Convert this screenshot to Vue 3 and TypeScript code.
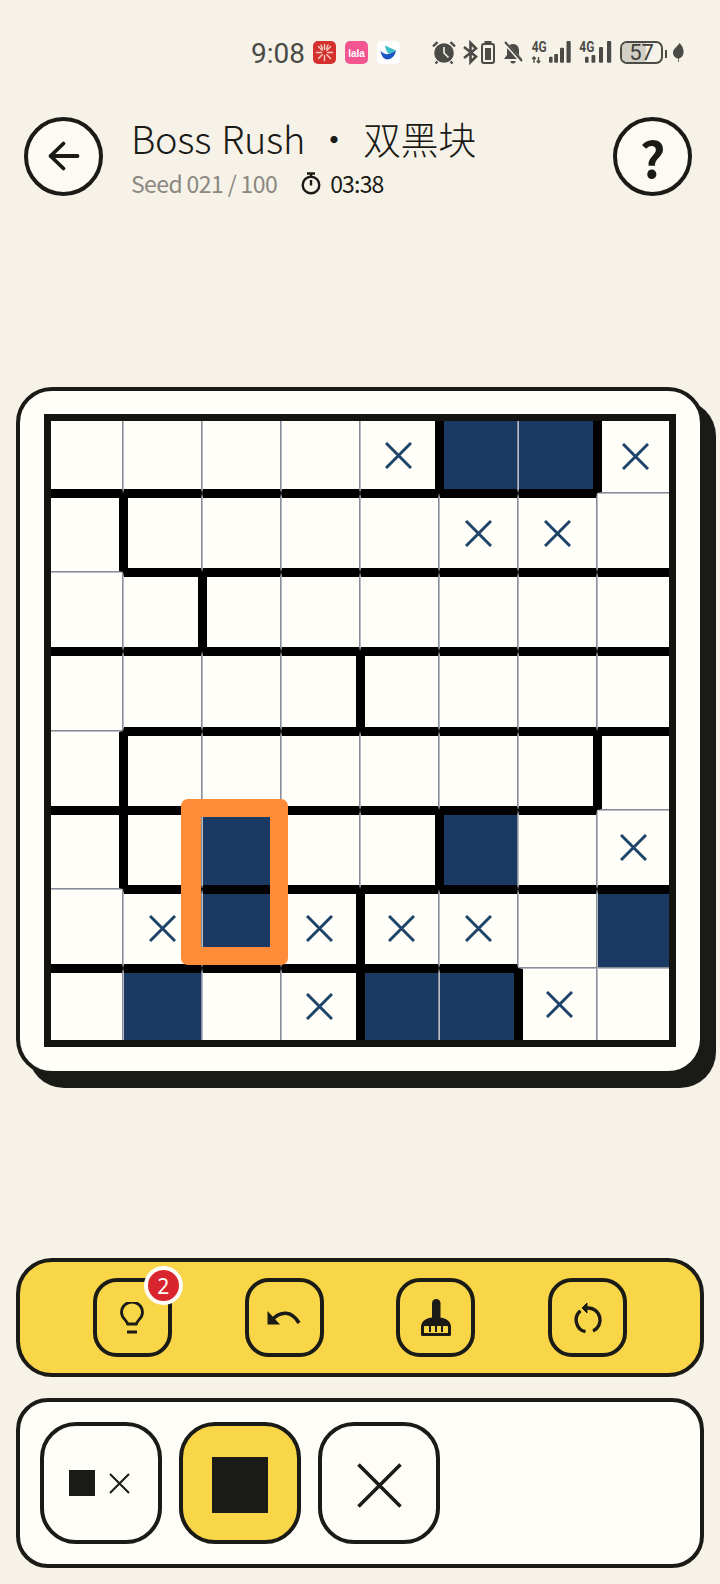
<script setup lang="ts">
// board contents: . empty, x crossed, # filled
const board = [
  "....x##x",
  ".....xx.",
  "........",
  "........",
  "........",
  "..#..#.x",
  ".x#xxx.#",
  ".#.x##x.",
];

// thick wall to the right of these columns, per row
const wallsRight: number[][] = [
  [4, 6],
  [0],
  [1],
  [3],
  [0, 6],
  [0, 4],
  [3],
  [3, 5],
];

// thick wall under these columns, per row
const wallsBelow: number[][] = [
  [0, 1, 2, 3, 4, 5, 6],
  [1, 2, 3, 4, 5, 6, 7],
  [0, 1, 2, 3, 4, 5, 6, 7],
  [1, 2, 3, 4, 5, 6, 7],
  [0, 1, 2, 3, 4, 5, 6],
  [1, 2, 3, 4, 5, 6, 7],
  [0, 1, 2, 3, 4, 5],
  [],
];

const cells = board.flatMap((line, r) =>
  line.split("").map((kind, c) => ({
    id: `${r}-${c}`,
    kind,
    classes: {
      filled: kind === "#",
      "wall-l": c === 0 ? false : wallsRight[r].includes(c - 1),
      "wall-r": wallsRight[r].includes(c),
      "wall-t": r === 0 ? false : wallsBelow[r - 1].includes(c),
      "wall-b": wallsBelow[r].includes(c),
      "edge-l": c === 0,
      "edge-r": c === 7,
      "edge-t": r === 0,
      "edge-b": r === 7,
    },
  }))
);
</script>

<template>
  <div class="page">
    <div class="status">
      <span class="time">9:08</span>
      <svg class="app-icon first" viewBox="0 0 23 23">
        <rect width="23" height="23" rx="5" fill="#d3302e" />
        <g stroke="#f5cfc4" stroke-width="1.400" stroke-linecap="round">
          <path d="M11.500 3.500v5M11.500 14.500v5M3.500 11.500h5M14.500 11.500h5M5.500 5.500l3.700 3.700M13.800 13.800l3.700 3.700M17.500 5.500l-3.700 3.700M9.200 13.800l-3.700 3.700M8 4l1.500 3.500M15 4l-1.500 3.500" />
        </g>
      </svg>
      <svg class="app-icon" viewBox="0 0 23 23">
        <rect width="23" height="23" rx="5" fill="#f2558f" />
        <text x="11.500" y="15.500" text-anchor="middle" class="lala">lala</text>
      </svg>
      <svg class="app-icon" viewBox="0 0 23 23">
        <rect width="23" height="23" rx="5" fill="#ffffff" />
        <path d="M3.500 10c2.500 2.500 5 3.500 8.500 3l7-3.500c-1 5.500-4.500 9-8.500 9-3.800 0-6.200-3.800-7-8.500z" fill="#1c56c4" />
        <path d="M8 4.500l11 5-7 3.500C9.800 11 8.300 8 8 4.500z" fill="#3bbcc4" />
      </svg>

      <svg class="sys alarm" width="24" height="23" viewBox="0 0 24 23">
        <circle cx="12" cy="12" r="9.800" fill="#4a4a46" />
        <path d="M12 6v6l4.500 4.500" fill="none" stroke="#f6f2e8" stroke-width="1.600" />
        <path d="M1 5.500l4.500-4.300M23 5.500l-4.500-4.300M5.500 20.500l-2 2M18.500 20.500l2 2" stroke="#4a4a46" stroke-width="2.400" fill="none" />
      </svg>
      <svg class="sys bt" width="16" height="23" viewBox="0 0 16 23">
        <path d="M1 6l12 9.500-5.500 5.500V2l5.500 5.500L1 17" fill="none" stroke="#4a4a46" stroke-width="2.600" />
      </svg>
      <svg class="sys minibat" width="14" height="23" viewBox="0 0 14 23">
        <rect x="3.500" y="0" width="7" height="2" fill="#4a4a46" />
        <rect x="1" y="3" width="12" height="19" rx="2" fill="none" stroke="#4a4a46" stroke-width="2" />
        <rect x="4" y="7" width="6" height="12" fill="#4a4a46" />
      </svg>
      <svg class="sys bell" width="20" height="23" viewBox="0 0 20 23">
        <path d="M10 3c4 0 6 3 6 7v4l3 4H1l3-4v-4c0-4 2-7 6-7z" fill="#4a4a46" />
        <path d="M7.500 20a2.500 2.500 0 0 0 5 0z" fill="#4a4a46" />
        <path d="M1.500 1.500l17 19" stroke="#f6f2e8" stroke-width="3.500" />
        <path d="M2 1l17 19" stroke="#4a4a46" stroke-width="2" />
      </svg>
      <svg class="sys sig-a" width="41" height="23" viewBox="0 0 41 23">
        <text x="0.700" y="11" class="net" textLength="15" lengthAdjust="spacingAndGlyphs">4G</text>
        <path d="M3 21.700v-5.500M1.200 18l1.800-2 1.800 2M7.500 16v5.500M5.700 19.700l1.800 2 1.800-2" fill="none" stroke="#4a4a46" stroke-width="1.400" />
        <rect x="18" y="15.700" width="3.600" height="6" rx="1" fill="#4a4a46" />
        <rect x="23.200" y="13" width="3.800" height="8.700" rx="1" fill="#4a4a46" />
        <rect x="29" y="6.700" width="4" height="15" rx="1" fill="#4a4a46" />
        <rect x="35.500" y="0" width="4.200" height="21.700" rx="1" fill="#4a4a46" />
      </svg>
      <svg class="sys sig-b" width="33" height="23" viewBox="0 0 33 23">
        <text x="0.300" y="11" class="net" textLength="15" lengthAdjust="spacingAndGlyphs">4G</text>
        <rect x="6" y="15.700" width="3.600" height="6" rx="1" fill="#4a4a46" />
        <rect x="12.500" y="14" width="3.800" height="7.700" rx="1" fill="#4a4a46" />
        <rect x="20" y="6" width="4" height="15.700" rx="1" fill="#4a4a46" />
        <rect x="28" y="0" width="4.200" height="21.700" rx="1" fill="#4a4a46" />
      </svg>
      <div class="battery">
        <div class="battery-fill"></div>
        <span class="battery-num">57</span>
      </div>
      <div class="battery-tip"></div>
      <svg class="sys leaf" width="11" height="19" viewBox="0 0 11 19">
        <path d="M6.500 0c3 3 4.500 6.500 4 10-.4 3-2.300 5-4.500 5.500L5.700 19H5l.2-3.500C2 15 0 12.500 0 9.500 0 6 4 4 6.500 0z" fill="#4a4a46" />
      </svg>
    </div>

    <header class="header">
      <button class="round-btn">
        <svg width="40" height="40" viewBox="0 0 40 40">
          <path d="M33.500 20H6.500M19.500 7.500L6.500 20l13 12.500" fill="none" stroke="#1a1a16" stroke-width="3.800" stroke-linecap="round" stroke-linejoin="round" />
        </svg>
      </button>
      <div class="titles">
        <div class="title">Boss Rush ・ 双黑块</div>
        <div class="sub">
          <span class="seed">Seed 021 / 100</span>
          <svg class="timer" width="20" height="23" viewBox="0 0 20 23">
            <path d="M6 1.500h8M10 2v3" stroke="#1a1a16" stroke-width="2.400" fill="none" />
            <circle cx="10" cy="13" r="8.300" fill="none" stroke="#1a1a16" stroke-width="2.400" />
            <path d="M10 8v5.500" stroke="#1a1a16" stroke-width="2.400" fill="none" />
          </svg>
          <span class="clock">03:38</span>
        </div>
      </div>
      <button class="round-btn help">?</button>
    </header>

    <section class="board-card">
      <div class="grid">
        <div v-for="cell in cells" :key="cell.id" class="cell" :class="cell.classes">
          <svg v-if="cell.kind === 'x'" width="27" height="27" viewBox="0 0 27 27">
            <path d="M1 1l25 25M26 1L1 26" stroke="#1f4469" stroke-width="3" />
          </svg>
        </div>
        <div class="highlight"></div>
      </div>
    </section>

    <section class="actions">
      <button class="action">
        <svg width="24" height="32" viewBox="0 0 24 32">
          <path d="M7.500 22c0-3.500-6-5.500-6-11.500a10.500 10.500 0 0 1 21 0c0 6-6 8-6 11.500z" fill="none" stroke="#1a1a16" stroke-width="2.800" stroke-linejoin="round" />
          <path d="M7 30h10" stroke="#1a1a16" stroke-width="3" />
        </svg>
        <span class="badge">2</span>
      </button>
      <button class="action">
        <svg width="34" height="16" viewBox="0 0 34 16">
          <path d="M0.500 1v13.500H13z" fill="#1a1a16" />
          <path d="M4 11C9 5 14 3 19 3.200c5 .3 9.500 3.800 13 9.800" fill="none" stroke="#1a1a16" stroke-width="3.600" />
        </svg>
      </button>
      <button class="action">
        <svg width="30" height="37" viewBox="0 0 30 37">
          <rect x="11" y="0" width="8.500" height="22" rx="4.250" fill="#1a1a16" />
          <path d="M1.500 35.500V28C1.500 23 7 19.500 15 19.500S28.500 23 28.500 28v7.500z" fill="#f8d648" stroke="#1a1a16" stroke-width="3" stroke-linejoin="round" />
          <path d="M2 27c0-5 5-7.500 13-7.500S28 22 28 27z" fill="#1a1a16" />
          <path d="M9 27v6M15 27v6M21 27v6" stroke="#1a1a16" stroke-width="2" />
        </svg>
      </button>
      <button class="action">
        <svg width="30" height="34" viewBox="0 0 30 34">
          <path d="M14 7.100A12 12 0 0 1 20 30" fill="none" stroke="#1a1a16" stroke-width="3.400" />
          <path d="M12.500 30.700A12 12 0 0 1 7.500 9.800" fill="none" stroke="#1a1a16" stroke-width="3.400" />
          <path d="M9 7l5-5v10z" fill="#1a1a16" stroke="#1a1a16" stroke-width="1" />
        </svg>
      </button>
    </section>

    <section class="tools">
      <button class="tool mixed">
        <span class="mini-square"></span>
        <svg width="21" height="21" viewBox="0 0 21 21">
          <path d="M1 1l19 19M20 1L1 20" stroke="#1a1a16" stroke-width="2" />
        </svg>
      </button>
      <button class="tool active">
        <span class="big-square"></span>
      </button>
      <button class="tool">
        <svg class="big-x" width="45" height="45" viewBox="0 0 45 45">
          <path d="M1.500 1.500l42 42M43.500 1.500l-42 42" stroke="#1a1a16" stroke-width="3.600" />
        </svg>
      </button>
    </section>
  </div>
</template>

<style scoped>
.page {
  width: 720px;
  height: 1584px;
  overflow: hidden;
  background: #f6f2e8;
  font-family: "Noto Sans CJK SC", "Noto Sans", sans-serif;
  color: #1a1a16;
}

.status {
  box-sizing: border-box;
  height: 117px;
  padding: 41px 36px 0 0;
  display: flex;
  justify-content: flex-end;
  align-items: flex-start;
}
.time {
  font-family: Roboto, sans-serif;
  font-size: 28px;
  line-height: 26px;
  color: #4a4a46;
}
.app-icon {
  width: 23px;
  height: 23px;
  margin-left: 9px;
}
.app-icon.first {
  margin-left: 8px;
}
.lala {
  font-family: "Liberation Sans", sans-serif;
  font-size: 10px;
  font-weight: 700;
  fill: #fff;
}
.net {
  font-family: Roboto, sans-serif;
  font-size: 14px;
  font-weight: 700;
  fill: #4a4a46;
}
.sys {
  display: block;
  overflow: visible;
}
.alarm {
  margin-left: 32px;
}
.bt {
  margin-left: 7px;
}
.minibat {
  margin-left: 2px;
}
.bell {
  margin-left: 8px;
}
.sig-a {
  margin-left: 8px;
}
.sig-b {
  margin-left: 7px;
}
.battery {
  position: relative;
  box-sizing: border-box;
  width: 43px;
  height: 23px;
  margin-left: 8px;
  border: 2px solid #4a4a46;
  border-radius: 7px;
  overflow: hidden;
  text-align: center;
}
.battery-fill {
  position: absolute;
  inset: 0 38% 0 0;
  background: #d2cfc7;
}
.battery-num {
  position: relative;
  display: block;
  font-family: Roboto, sans-serif;
  font-size: 22px;
  line-height: 19px;
  color: #3e3e3a;
}
.battery-tip {
  width: 2px;
  height: 8px;
  margin: 9px 0 0 2px;
  background: #4a4a46;
}
.leaf {
  margin: 2px 0 0 6px;
}

.header {
  height: 78px;
  padding: 0 28px 0 24px;
  display: flex;
  align-items: center;
}
.round-btn {
  box-sizing: border-box;
  width: 79px;
  height: 79px;
  flex: none;
  padding: 0;
  display: flex;
  align-items: center;
  justify-content: center;
  background: #fcfaf3;
  border: 4px solid #1a1a16;
  border-radius: 50%;
  color: #1a1a16;
}
.help {
  margin-left: auto;
  font-family: "Noto Sans CJK SC", sans-serif;
  font-size: 50px;
  font-weight: 700;
  line-height: 1;
}
.titles {
  margin-left: 28px;
}
.title {
  font-size: 38px;
  font-weight: 300;
  letter-spacing: -0.3px;
  word-spacing: 2px;
  line-height: 48px;
  white-space: nowrap;
}
.sub {
  display: flex;
  align-items: center;
  height: 30px;
  margin-top: 6px;
  font-size: 23px;
}
.seed {
  color: #8a8880;
  letter-spacing: -0.6px;
}
.timer {
  margin-left: 24px;
}
.clock {
  margin-left: 9px;
  letter-spacing: -0.8px;
}

.board-card {
  box-sizing: border-box;
  width: 688px;
  height: 688px;
  margin: 192px 0 0 16px;
  padding: 23px 24px 0;
  background: #fffef8;
  border: 4px solid #1a1a16;
  border-radius: 36px;
  box-shadow: 12px 13px 0 #1a1a16;
}
.grid {
  position: relative;
  width: 632px;
  height: 633px;
  display: grid;
  grid-template-columns: repeat(8, 1fr);
  grid-template-rows: repeat(8, 1fr);
}
/* outer frame sits on top so the cell borders don't mitre into it */
.grid::after {
  content: "";
  position: absolute;
  inset: 0;
  border: 7px solid #141410;
  pointer-events: none;
}
.cell {
  box-sizing: border-box;
  display: flex;
  align-items: center;
  justify-content: center;
  background: #fffef8;
  background-clip: padding-box;
  border-style: solid;
  border-color: #b9bbc4 #888c98 #888c98 #b9bbc4;
  border-width: 1px;
}
.cell.filled {
  background: #1a3a63;
  background-clip: padding-box;
}
.wall-l {
  border-left: 5px solid #000;
}
.wall-r {
  border-right: 4px solid #000;
}
.wall-t {
  border-top: 5px solid #000;
}
.wall-b {
  border-bottom: 4px solid #000;
}
.edge-l {
  border-left: 7px solid #141410;
}
.edge-r {
  border-right: 7px solid #141410;
}
.edge-t {
  border-top: 7px solid #141410;
}
.edge-b {
  border-bottom: 7px solid #141410;
}
.highlight {
  position: absolute;
  left: 137px;
  top: 385px;
  box-sizing: border-box;
  width: 107px;
  height: 166px;
  border: 18px solid #ff8c38;
  border-left-width: 20px;
  border-radius: 7px;
}

.actions {
  box-sizing: border-box;
  width: 688px;
  height: 119px;
  margin: 183px 0 0 16px;
  display: flex;
  align-items: center;
  justify-content: space-evenly;
  background: #f8d648;
  border: 4px solid #1a1a16;
  border-radius: 36px;
}
.action {
  position: relative;
  box-sizing: border-box;
  width: 79px;
  height: 79px;
  padding: 0;
  display: flex;
  align-items: center;
  justify-content: center;
  background: transparent;
  border: 4px solid #1a1a16;
  border-radius: 24px;
}
.badge {
  position: absolute;
  top: -16px;
  right: -15px;
  box-sizing: border-box;
  width: 39px;
  height: 39px;
  display: flex;
  align-items: center;
  justify-content: center;
  background: #d9252e;
  border: 4px solid #fffef8;
  border-radius: 50%;
  color: #fff;
  font-family: "Noto Sans", sans-serif;
  font-size: 21px;
}

.tools {
  box-sizing: border-box;
  width: 688px;
  height: 170px;
  margin: 21px 0 0 16px;
  padding: 0 20px;
  display: flex;
  align-items: center;
  gap: 17px;
  background: #fffdf7;
  border: 4px solid #1a1a16;
  border-radius: 32px;
}
.tool {
  box-sizing: border-box;
  width: 122px;
  height: 122px;
  padding: 0;
  display: flex;
  align-items: center;
  justify-content: center;
  background: #fffdf7;
  border: 4px solid #1a1a16;
  border-radius: 36px;
}
.tool.mixed {
  gap: 14px;
  padding-right: 3px;
}
.tool.active {
  background: #f8d648;
}
.mini-square {
  width: 26px;
  height: 26px;
  background: #1a1a16;
}
.big-square {
  width: 56px;
  height: 56px;
  margin-top: 3px;
  background: #1a1a16;
}
.big-x {
  margin-top: 4px;
}
</style>

<style>
body {
  background: #f6f2e8;
}
</style>
